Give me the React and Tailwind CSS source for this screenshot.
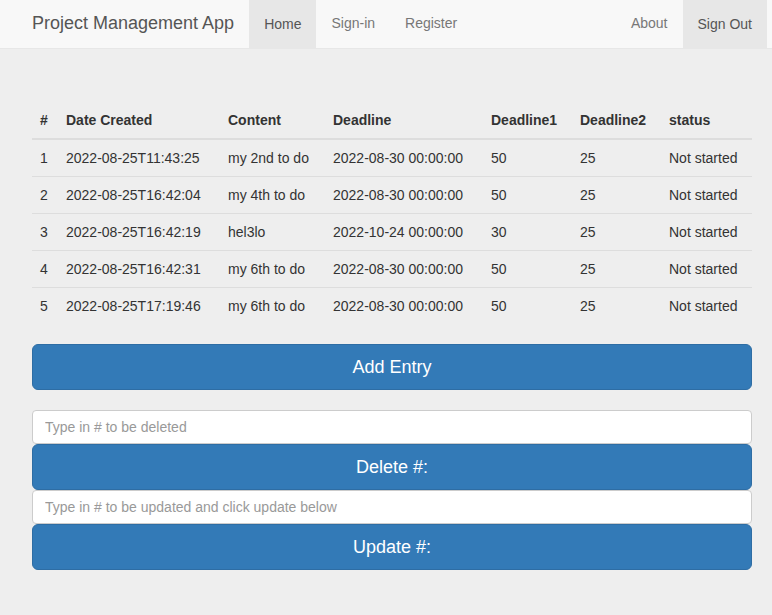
import React from 'react';

const rows = [
  { id: 1, created: '2022-08-25T11:43:25', content: 'my 2nd to do', deadline: '2022-08-30 00:00:00', d1: '50', d2: '25', status: 'Not started' },
  { id: 2, created: '2022-08-25T16:42:04', content: 'my 4th to do', deadline: '2022-08-30 00:00:00', d1: '50', d2: '25', status: 'Not started' },
  { id: 3, created: '2022-08-25T16:42:19', content: 'hel3lo', deadline: '2022-10-24 00:00:00', d1: '30', d2: '25', status: 'Not started' },
  { id: 4, created: '2022-08-25T16:42:31', content: 'my 6th to do', deadline: '2022-08-30 00:00:00', d1: '50', d2: '25', status: 'Not started' },
  { id: 5, created: '2022-08-25T17:19:46', content: 'my 6th to do', deadline: '2022-08-30 00:00:00', d1: '50', d2: '25', status: 'Not started' },
];

const cols = ['w-[26px]', 'w-[162px]', 'w-[105px]', 'w-[158px]', 'w-[89px]', 'w-[89px]', 'w-[91px]'];

export default function App() {
  return (
    <div className="min-h-[615px] bg-[#eeeeee] text-[14px] text-[#333333] font-['Liberation_Sans',Arial,sans-serif]">
      {/* Navbar */}
      <nav className="h-[49px] bg-[#f8f8f8] border-b border-[#e7e7e7] flex items-stretch pl-[32px] pr-[5px] pb-[1px]">
        <span className="flex items-center text-[18px] text-[#555555] pr-[15px]">Project Management App</span>
        <a className="flex items-center px-[15px] bg-[#e7e7e7] text-[#555555] -mb-[1px]">Home</a>
        <a className="flex items-center px-[15px] text-[#777777]">Sign-in</a>
        <a className="flex items-center px-[15px] text-[#777777]">Register</a>
        <div className="flex-1" />
        <a className="flex items-center px-[15px] text-[#777777]">About</a>
        <a className="flex items-center px-[15px] bg-[#e7e7e7] text-[#555555] -mb-[1px]">Sign Out</a>
      </nav>

      <div className="w-[720px] ml-[32px] pt-[53px]">
        <table className="w-[720px] table-fixed border-collapse mb-[20px]">
          <thead>
            <tr className="border-b-2 border-[#dddddd]">
              {['#', 'Date Created', 'Content', 'Deadline', 'Deadline1', 'Deadline2', 'status'].map((h, i) => (
                <th key={h} className={`${cols[i]} text-left font-bold p-[8px] leading-[20px]`}>{h}</th>
              ))}
            </tr>
          </thead>
          <tbody>
            {rows.map((r) => (
              <tr key={r.id} className="border-t border-[#dddddd]">
                {[r.id, r.created, r.content, r.deadline, r.d1, r.d2, r.status].map((v, i) => (
                  <td key={i} className="p-[8px] leading-[20px] whitespace-nowrap">{v}</td>
                ))}
              </tr>
            ))}
          </tbody>
        </table>

        <button className="w-full h-[46px] bg-[#337ab7] border border-[#2e6da4] rounded-[6px] text-white text-[18px] leading-[24px]">
          Add Entry
        </button>

        <div className="mt-[20px]">
          <input
            className="block w-full h-[34px] bg-white border border-[#cccccc] rounded-[4px] px-[12px] text-[14px] placeholder:text-[#999999] outline-none"
            placeholder="Type in # to be deleted"
          />
          <button className="w-full h-[46px] bg-[#337ab7] border border-[#2e6da4] rounded-[6px] text-white text-[18px] leading-[24px]">
            Delete #:
          </button>
          <input
            className="block w-full h-[34px] bg-white border border-[#cccccc] rounded-[4px] px-[12px] text-[14px] placeholder:text-[#999999] outline-none"
            placeholder="Type in # to be updated and click update below"
          />
          <button className="w-full h-[46px] bg-[#337ab7] border border-[#2e6da4] rounded-[6px] text-white text-[18px] leading-[24px]">
            Update #:
          </button>
        </div>
      </div>
    </div>
  );
}
